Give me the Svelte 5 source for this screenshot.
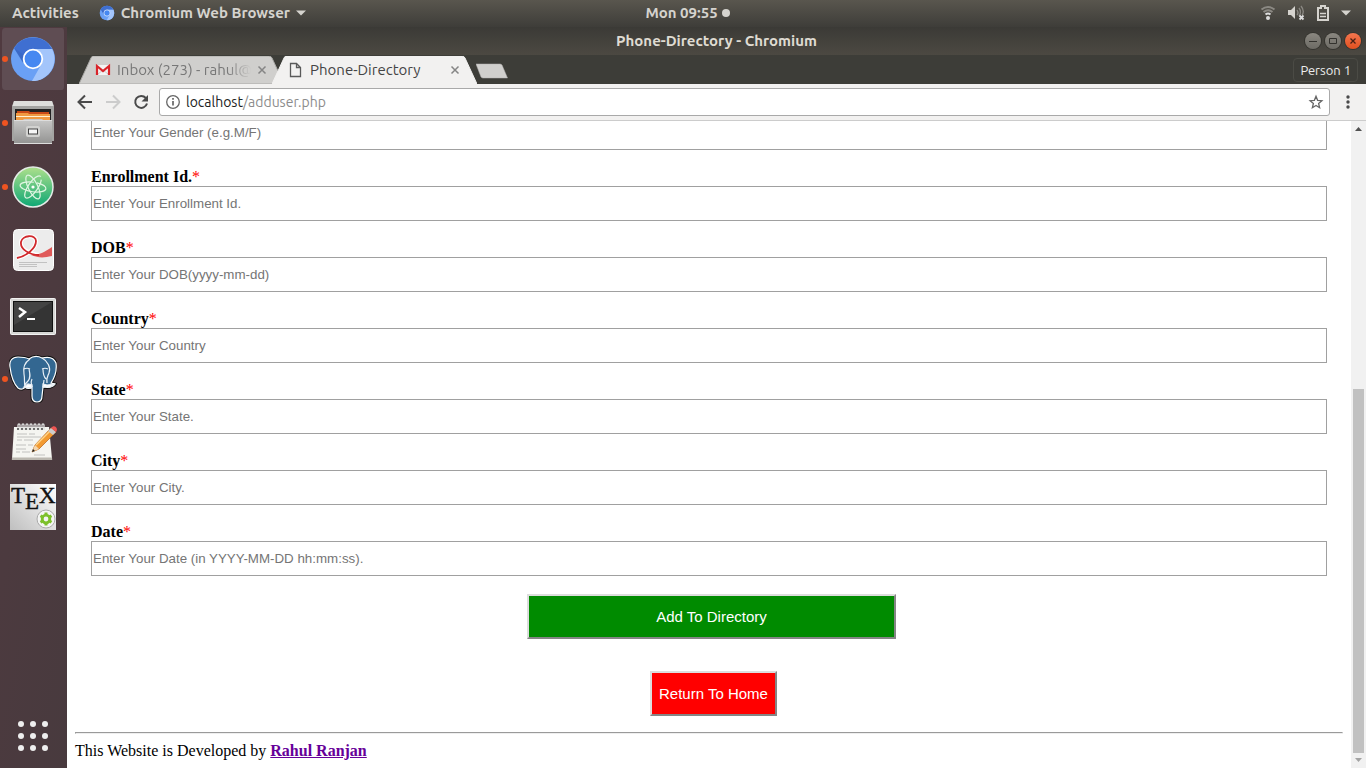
<script>
  const fields = [
    { id: 'enrollment', label: 'Enrollment Id.', hint: 'Enter Your Enrollment Id.' },
    { id: 'dob', label: 'DOB', hint: 'Enter Your DOB(yyyy-mm-dd)' },
    { id: 'country', label: 'Country', hint: 'Enter Your Country' },
    { id: 'state', label: 'State', hint: 'Enter Your State.' },
    { id: 'city', label: 'City', hint: 'Enter Your City.' },
    { id: 'date', label: 'Date', hint: 'Enter Your Date (in YYYY-MM-DD hh:mm:ss).' },
  ];
  const apps = [
    { name: 'Chromium', icon: 'chromium', running: true, active: true },
    { name: 'Files', icon: 'files', running: true },
    { name: 'Atom', icon: 'atom', running: true },
    { name: 'Document Viewer', icon: 'viewer' },
    { name: 'Terminal', icon: 'terminal' },
    { name: 'pgAdmin', icon: 'postgres', running: true },
    { name: 'Text Editor', icon: 'editor' },
    { name: 'TeX Studio', icon: 'tex' },
  ];
  const tabs = [
    { title: 'Inbox (273) - rahul@', icon: 'mail', active: false },
    { title: 'Phone-Directory', icon: 'page', active: true },
  ];
  const gridDots = [0, 1, 2, 3, 4, 5, 6, 7, 8];
  const rings = [0, 1, 2, 3, 4, 5, 6];
  const elephant =
    'M9 2C3 2 0 6 1 12c1 8 4 17 8 21 3 2 6 1 7-1 2 2 5 2 7 0v9c0 4 2 6 5 6s5-2 5-6l1-9c5 1 10 0 12-3l-4-1c4-6 6-13 5-20C45 3 41 1 33 3c-4-2-9-2-13 1-4-2-7-2-11-2Z';
</script>

{#snippet chromium(size)}
  <svg width={size} height={size} viewBox="0 0 48 48" aria-hidden="true">
    <circle cx="24" cy="24" r="22" fill="#6aa0f5" />
    <path d="M5 13A22 22 0 0 1 43.100 14H24A10 10 0 0 0 14.500 28Z" fill="#3f6fd1" />
    <path d="M24 14h19.100A22 22 0 0 1 23 46l9.500-17A10 10 0 0 0 24 14Z" fill="#a3c5fb" />
    <path d="M15 20l-1 8L5 13Z" fill="#3563bd" opacity=".5" />
    <circle cx="24" cy="24" r="9.300" fill="#4688f1" stroke="#fff" stroke-width="1.800" />
  </svg>
{/snippet}

{#snippet appIcon(icon)}
  {#if icon === 'chromium'}
    {@render chromium(48)}
  {:else}
    <svg width="48" height="48" viewBox="0 0 48 48" aria-hidden="true">
      {#if icon === 'files'}
        <defs><linearGradient id="cab" x1="0" y1="0" x2="0" y2="1"><stop offset="0" stop-color="#c9c9c8" /><stop offset="1" stop-color="#929291" /></linearGradient></defs>
        <path d="M5 2h38l2 5v35H3V7Z" fill="#a4a4a2" />
        <path d="M5 2h38l1.500 5h-41Z" fill="#dededc" />
        <path d="M6 10h36v11H6Z" fill="#222" />
        <path d="M8 12h12l1 1h19v8H8Z" fill="#c94a17" />
        <path d="M7 14h12l1 1h21v7H7Z" fill="#f09a42" />
        <path d="M7 17h34v1H7Z" fill="#fff0d0" />
        <path d="M5 21h9l1-1h18l1 1h9v24H5Z" fill="url(#cab)" />
        <path d="M5 21.500h38M5 44.500h38" stroke="#ddd" />
        <rect x="17" y="27" width="14" height="11" rx="2" fill="#d2d2d0" />
        <rect x="19.500" y="30" width="9" height="5" fill="#f6f6f6" stroke="#444" />
      {:else if icon === 'atom'}
        <defs><linearGradient id="atm" x1="0" y1="0" x2="0" y2="1"><stop offset="0" stop-color="#aee08c" /><stop offset="1" stop-color="#0da774" /></linearGradient></defs>
        <circle cx="24" cy="24" r="20" fill="url(#atm)" stroke="#e4ebe7" stroke-width="1.500" />
        <g fill="none" stroke="#e0f5e2" stroke-width="1.200">
          <ellipse cx="24" cy="24" rx="13" ry="4.800" transform="rotate(8 24 24)" stroke-dasharray="44 3 20" />
          <ellipse cx="24" cy="24" rx="13" ry="4.800" transform="rotate(64 24 24)" />
          <ellipse cx="24" cy="24" rx="13" ry="4.800" transform="rotate(124 24 24)" stroke-dasharray="30 3 40" />
        </g>
        <circle cx="24" cy="24" r="1.600" fill="#fff" />
      {:else if icon === 'viewer'}
        <rect x="4.500" y="2.500" width="40" height="41" rx="4" fill="#ececec" stroke="#fff" />
        <path d="M8 31C18 29 27 21 27 14C27 7 13 8 12 15c-1 8 13 16 31 12" fill="none" stroke="#fff" stroke-width="4" />
        <path d="M22 28c8 0 14-3 21-8v9c-8 2-14 2-21-1Z" fill="#e05a5a" />
        <path d="M8 31C18 29 27 21 27 14C27 7 13 8 12 15c-1 7 8 13 18 13" fill="none" stroke="#d0292d" stroke-width="1.800" />
        <path d="M10 35.500h28M10 37.500h18M10 39.500h18" stroke="#b8b8b8" stroke-width=".8" />
      {:else if icon === 'terminal'}
        <rect x="1.500" y="7.500" width="45" height="36" rx="1" fill="#d7d7d5" stroke="#f2f2f2" />
        <rect x="4.500" y="10.500" width="39" height="30" fill="#343434" stroke="#111" />
        <path d="M5 11h38L5 34Z" fill="#666" opacity=".3" />
        <path d="M10 17l6 4-6 5" fill="none" stroke="#fff" stroke-width="2.500" />
        <path d="M18 28h8" stroke="#fff" stroke-width="2" />
      {:else if icon === 'postgres'}
        <path d={elephant} fill="#336791" stroke="#111" stroke-width="3" />
        <path d={elephant} fill="#336791" stroke="#fff" stroke-width="1.200" />
        <g fill="none" stroke="#e8eff5" stroke-width="1.200">
          <path d="M21 4c-6 4-7 10-6 15s0 9 1 13M33 3c6 3 9 10 7 15-1 3-3 4-2 10M23 32c0-3-2-4 0-8M20 14c1 5 2 9-1 12-2 2-4 4-3 6M15 14c2-1 4-1 6 0M33 14c2-1 4-1 6 0M34 14c0 5 1 8 3 10M35 25l-1 7" />
          <path d="M15 32l4-3 4 1-1 3Z" fill="#fff" /><path d="M34 29l4 1 8-1-5 3h-7Z" fill="#fff" />
        </g>
      {:else if icon === 'editor'}
        <path d="M5 8h35l3 32H3Z" fill="#f5f5f1" />
        <path d="M3 38.500h40l.2 2.500H2.800Z" fill="#bbb8b0" />
        {#each rings as ring}
          <path d={`M${9 + ring * 4} 10V6a1 1 0 0 1 2 0v5`} fill="none" stroke="#ddd" stroke-width="1.300" />
          <circle cx={9 + ring * 4} cy="10" r="1" fill="#444" />
        {/each}
        <path d="M8 15h10m2 0h6M8 18h24M8 21h5m2 0h9M7 26h10m2 0h5M7 30h10M7 33h4m2 0h8M25 36h11" stroke="#b4b4b4" stroke-width=".8" />
        <path d="M23 33l3-7L42 9l5 4-17 17Z" fill="#f29a31" stroke="#b46218" stroke-width=".7" />
        <path d="M27 26L43 10" stroke="#ffd58a" stroke-width="1.500" />
        <path d="M23 33l3-7 4 4Z" fill="#f3d6ae" /><path d="M23 33l1-3 2 2Z" fill="#222" />
        <path d="M39 12l3-3 5 4-3 3Z" fill="#ccc" /><path d="M42 9c3-4 8 0 5 4Z" fill="#ee5553" />
      {:else if icon === 'tex'}
        <defs><linearGradient id="txg" x1="1" y1="0" x2="0" y2="1"><stop offset="0" stop-color="#fff" /><stop offset="1" stop-color="#bfbfbf" /></linearGradient></defs>
        <rect x="1" y="1" width="46" height="46" fill="url(#txg)" />
        <g font-family="Liberation Serif, serif" font-size="23" fill="#111" stroke="#111" stroke-width=".4">
          <text x="2" y="20">T</text><text x="16" y="26">E</text><text x="30" y="20">X</text>
        </g>
        <circle cx="37" cy="36" r="9" fill="#f4f4f4" stroke="#aaa" />
        <circle cx="37" cy="36" r="3.800" fill="none" stroke="#7cc02b" stroke-width="2.800" />
        <path d="M37 29.500v3M37 39.500v3M31.500 32.800l2.500 1.500M40 37.700l2.500 1.500M31.500 39.200l2.500-1.500M40 34.300l2.500-1.500" stroke="#7cc02b" stroke-width="3" />
      {/if}
    </svg>
  {/if}
{/snippet}

<div class="desktop">
  <header class="topbar">
    <div class="left">
      <button>Activities</button>
      <button class="appmenu">
        {@render chromium(16)}
        <span>Chromium Web Browser</span>
        <svg width="10" height="6" viewBox="0 0 10 6" aria-hidden="true"><path d="M0 0.500h10L5 5.500Z" fill="#d5d3ce" /></svg>
      </button>
    </div>
    <button class="clock">Mon 09:55 <i></i></button>
    <button class="status" aria-label="System menu">
      <svg width="16" height="18" viewBox="0 0 16 18" aria-hidden="true">
        <g fill="none" stroke-width="2"><path d="M1.500 5.500q6.500-5 13 0" stroke="#8b8983" /><path d="M3.500 8q4.500-3.500 9 0" stroke="#8b8983" /><path d="M5.500 10.500q2.500-2 5 0" stroke="#ddd" /></g><circle cx="8" cy="14" r="2" fill="#ddd" />
      </svg>
      <svg width="18" height="18" viewBox="0 0 18 18" aria-hidden="true">
        <path d="M1 6h3l4-4v13l-4-4H1Z" fill="#d5d3ce" />
        <path d="M10 6q2 3 0 5M12 4q3 4 0 8M14 2q4 5 1 9" stroke="#8b8983" fill="none" stroke-width="1.300" />
        <path d="M12.500 11.500l4 4m0-4l-4 4" stroke="#ddd" stroke-width="1.800" />
      </svg>
      <svg width="14" height="18" viewBox="0 0 14 18" aria-hidden="true">
        <path d="M5 2h4v2h3v12H2V4h3Z" fill="none" stroke="#d5d3ce" stroke-width="2" /><path d="M4 9.500h6M4 12.500h6" stroke="#d5d3ce" stroke-width="1.300" />
      </svg>
      <svg width="10" height="6" viewBox="0 0 10 6" aria-hidden="true"><path d="M0 0.500h10L5 5.500Z" fill="#d5d3ce" /></svg>
    </button>
  </header>

  <nav class="dock" aria-label="Applications">
    {#each apps as app}
      <button class="app" class:active={app.active} class:running={app.running} aria-label={app.name}>
        {@render appIcon(app.icon)}
      </button>
    {/each}
    <button class="app all" aria-label="Show applications">
      <svg width="48" height="48" viewBox="0 0 48 48" aria-hidden="true">
        {#each gridDots as dot}
          <circle cx={12 + (dot % 3) * 12} cy={12 + Math.floor(dot / 3) * 12} r="3" fill="#eee" />
        {/each}
      </svg>
    </button>
  </nav>

  <section class="window">
    <div class="titlebar">
      <span></span>
      <strong>Phone-Directory - Chromium</strong>
      <div class="controls">
        <button aria-label="Minimize"><svg viewBox="0 0 16 16" aria-hidden="true"><path d="M4 8.500h8" stroke="#33322e" /></svg></button>
        <button aria-label="Maximize"><svg viewBox="0 0 16 16" aria-hidden="true"><path d="M4.500 5.500h7v5h-7Z" fill="none" stroke="#33322e" /></svg></button>
        <button class="close" aria-label="Close"><svg viewBox="0 0 16 16" aria-hidden="true"><path d="M5.500 5.500l5 5m0-5l-5 5" stroke="#4a2014" stroke-width="1.300" /></svg></button>
      </div>
    </div>

    <div class="strip">
      {#each tabs as tab}
        <div class="tab" class:active={tab.active}>
          <svg class="shape" viewBox="0 0 205 28" preserveAspectRatio="none" aria-hidden="true">
            <path d="M0 28L12 2q1-2 2-2H190q2 0 3 2L205 28Z" />
          </svg>
          {#if tab.icon === 'mail'}
            <svg width="16" height="16" viewBox="0 0 16 16" aria-hidden="true"><path d="M1 3h14v10H1Z" fill="#f3f3f3" /><path d="M3 12l5-4 5 4" fill="none" stroke="#ccc" /><path d="M2 13V4l6 5 6-5v9" fill="none" stroke="#d9242a" stroke-width="2.200" /></svg>
          {:else}
            <svg width="16" height="16" viewBox="0 0 16 16" aria-hidden="true"><path d="M2.500 1.500h6l4 4v9h-10ZM8.500 1.500v4h4" fill="none" stroke="#5a5a5a" stroke-width="1.300" /></svg>
          {/if}
          <button class="name">{tab.title}</button>
          <button class="shut" aria-label="Close tab"><svg width="10" height="10" viewBox="0 0 10 10" aria-hidden="true"><path d="M1.500 1.500l7 7m0-7l-7 7" stroke="#858585" stroke-width="1.500" /></svg></button>
        </div>
      {/each}
      <button class="newtab" aria-label="New tab"><svg width="33" height="16" viewBox="0 0 33 16" aria-hidden="true"><path d="M0 1h24q1 0 2 1l5.500 13H7q-1 0-2-1Z" fill="#d0cfcd" stroke="#b4b3b0" stroke-width=".5" /></svg></button>
      <button class="person">Person 1</button>
    </div>

    <div class="toolbar">
      <button aria-label="Back"><svg width="16" height="16" viewBox="0 0 16 16" aria-hidden="true"><path d="M15 8H2.500M8 1.500L1.500 8 8 14.500" fill="none" stroke="#4a4a4a" stroke-width="2" /></svg></button>
      <button aria-label="Forward"><svg width="16" height="16" viewBox="0 0 16 16" aria-hidden="true"><path d="M1 8h12.500M8 1.500L14.500 8 8 14.500" fill="none" stroke="#ccc" stroke-width="2" /></svg></button>
      <button aria-label="Reload"><svg width="16" height="16" viewBox="0 0 16 16" aria-hidden="true"><path d="M12.800 4A6 6 0 1 0 14 9.500" fill="none" stroke="#4a4a4a" stroke-width="2" /><path d="M15 1v6.500H8.500Z" fill="#4a4a4a" /></svg></button>
      <div class="address">
        <svg width="16" height="16" viewBox="0 0 16 16" aria-hidden="true"><circle cx="8" cy="8" r="6.300" fill="none" stroke="#666" stroke-width="1.300" /><path d="M8 7v4.500M8 4v1.800" stroke="#666" stroke-width="1.700" /></svg>
        <span class="url">localhost<span>/adduser.php</span></span>
        <button aria-label="Bookmark"><svg width="16" height="16" viewBox="0 0 16 16" aria-hidden="true"><path d="M8 2.300l1.600 4 4.300.4-3.300 2.800 1 4.200L8 11.500l-3.600 2.200 1-4.200-3.300-2.800 4.300-.4Z" fill="none" stroke="#666" stroke-width="1.300" /></svg></button>
      </div>
      <button aria-label="Menu"><svg width="16" height="16" viewBox="0 0 16 16" aria-hidden="true"><g fill="#4a4a4a"><circle cx="8" cy="3" r="1.700" /><circle cx="8" cy="8" r="1.700" /><circle cx="8" cy="13" r="1.700" /></g></svg></button>
    </div>

    <div class="view">
      <main>
        <form onsubmit={(e) => e.preventDefault()}>
          <div class="field"><input type="text" aria-label="Gender" placeholder="Enter Your Gender (e.g.M/F)" /></div>
          {#each fields as field}
            <div class="field">
              <label for={field.id}><b>{field.label}</b><span>*</span></label>
              <input type="text" id={field.id} placeholder={field.hint} />
            </div>
          {/each}
          <div class="actions">
            <button type="submit" class="add">Add To Directory</button>
            <button type="button" class="home">Return To Home</button>
          </div>
        </form>
        <hr />
        <footer>This Website is Developed by <a href="#rahul">Rahul Ranjan</a></footer>
      </main>
      <div class="scroll" aria-hidden="true">
        <svg width="15" height="15" viewBox="0 0 15 15"><path d="M4 10l3.500-4 3.500 4Z" fill="#505050" /></svg>
        <div class="before"></div>
        <div class="thumb"></div>
        <svg width="15" height="15" viewBox="0 0 15 15"><path d="M4 5l3.500 4L11 5Z" fill="#a3a3a3" /></svg>
      </div>
    </div>
  </section>
</div>

<style>
  :global(body) { margin: 0; overflow: hidden; }
  .desktop {
    height: 100vh;
    display: grid;
    grid-template: 27px minmax(0, 1fr) / 67px minmax(0, 1fr);
    font: 14px/20px Ubuntu, "Noto Sans", sans-serif;
  }
  button { border: 0; padding: 0; background: none; font: inherit; color: inherit; }
  svg { display: block; flex: none; }

  .topbar {
    grid-column: 1 / -1;
    display: grid;
    grid-template-columns: 1fr auto 1fr;
    align-items: center;
    padding: 0 15px 2px 12px;
    background: linear-gradient(#59564e, #3e3d39);
    color: #d5d3ce;
    font-size: 15px;
    font-weight: 600;
    text-shadow: 0 1px 1px #222;
  }
  .left { display: flex; gap: 20px; }
  .appmenu { display: flex; align-items: center; gap: 6px; }
  .clock { display: flex; align-items: center; gap: 4px; padding-left: 12px; }
  .clock i { width: 8px; height: 8px; border-radius: 50%; background: #d5d3ce; }
  .status { justify-self: end; display: flex; align-items: center; gap: 11px; }

  .dock { display: flex; flex-direction: column; background: linear-gradient(100deg, #503a40, #483a3e); }
  .app { position: relative; height: 64px; display: grid; place-items: center; padding-right: 1px; }
  .all { margin-top: auto; }
  .app.active { background: #5f4d53; background-clip: content-box; padding: 1px 3px 1px 2px; border-radius: 5px; }
  .running::before {
    content: "";
    position: absolute;
    left: 2px;
    top: 29px;
    width: 6px;
    height: 6px;
    border-radius: 50%;
    background: #ee5421;
  }

  .window { min-width: 0; display: grid; grid-template-rows: 28px 29px 37px minmax(0, 1fr); background: #fff; }
  .titlebar {
    display: grid;
    grid-template-columns: 1fr auto 1fr;
    align-items: center;
    padding-right: 5px;
    background: linear-gradient(#3b3a36, #4c4942);
    color: #dfdbd2;
    font-size: 15px;
  }
  .titlebar strong { padding-left: 5px; font-weight: 700; }
  .controls { display: flex; gap: 4px; justify-self: end; }
  .controls button { width: 16px; height: 16px; border-radius: 50%; background: linear-gradient(#8a8780, #6d6b65); box-shadow: 0 0 0 1px #35342f; }
  .controls .close { background: linear-gradient(#f4764f, #e2501f); }

  .strip { display: flex; align-items: flex-end; padding: 0 8px 0 12px; background: #3d3d38; }
  .tab {
    position: relative;
    box-sizing: border-box;
    width: 205px;
    height: 28px;
    display: flex;
    align-items: center;
    gap: 6px;
    padding: 0 17px 0 16px;
    color: #777;
  }
  .tab > :not(.shape) { position: relative; }
  .tab + .tab { margin-left: -12px; }
  .tab.active { z-index: 1; color: #444; }
  .shape { position: absolute; inset: 0; width: 100%; height: 100%; }
  .shape path { fill: #d0cfcd; stroke: #aaa9a6; stroke-width: 1; }
  .active .shape path { fill: #f2f1f0; stroke: #f2f1f0; }
  .name { flex: 1; min-width: 0; overflow: hidden; white-space: nowrap; text-align: left; font-size: 15px; }
  .tab:not(.active) .name { mask-image: linear-gradient(90deg, #000 82%, transparent); }
  .newtab { margin: 0 auto 5px -1px; }
  .person { height: 24px; margin-bottom: 2px; padding: 0 6px; border: 1px solid #4b4b45; border-radius: 4px; color: #eee; font-size: 13px; line-height: 20px; }

  .toolbar { box-sizing: border-box; display: flex; align-items: center; gap: 12px; padding: 0 10px 1px; background: #f2f1f0; border-bottom: 1px solid #ccc; }
  .address {
    flex: 1;
    box-sizing: border-box;
    height: 28px;
    display: flex;
    align-items: center;
    gap: 5px;
    margin: 0 -2px;
    padding: 0 5px;
    border: 1px solid #a9a9a9;
    border-radius: 3px;
    background: #fff;
  }
  .url { flex: 1; color: #222; }
  .url span { color: #8c8c8c; }

  .view { min-height: 0; display: flex; }
  main {
    flex: 1;
    min-width: 0;
    display: flex;
    flex-direction: column;
    justify-content: flex-end;
    overflow: hidden;
    padding: 0 8px 8px;
    font: 16px/18px "Liberation Serif", serif;
    color: #000;
  }
  form { padding: 0 16px 16px; }
  .field { margin-bottom: 18px; }
  label { display: block; }
  label span { color: #f00; }
  input {
    display: block;
    box-sizing: border-box;
    width: 100%;
    height: 35px;
    padding: 1px;
    border: 1px solid #a0a0a0;
    border-radius: 0;
    font-family: "Liberation Sans", sans-serif;
  }
  input::placeholder { color: #757575; }
  .actions { display: flex; flex-direction: column; align-items: center; gap: 32px; padding-left: 5px; }
  .actions button {
    height: 45px;
    padding: 0 7px;
    border: 2px solid;
    border-color: #ddd #858585 #858585 #ddd;
    color: #fff;
    font: 15px "Liberation Sans", sans-serif;
  }
  .actions .add { width: 30%; background: #008b00; }
  .actions .home { margin-left: 4px; background: #f00; }
  hr { width: 100%; box-sizing: border-box; margin: 0 0 8px; border: 1px solid; border-color: #9a9a9a #eee #eee #9a9a9a; }
  a { color: #609; font-weight: 700; }
  .scroll { flex: none; width: 15px; display: flex; flex-direction: column; background: #f1f1f1; }
  .before { flex: 253; }
  .thumb { flex: 364; margin: 0 2px; background: #c1c1c1; }
</style>
